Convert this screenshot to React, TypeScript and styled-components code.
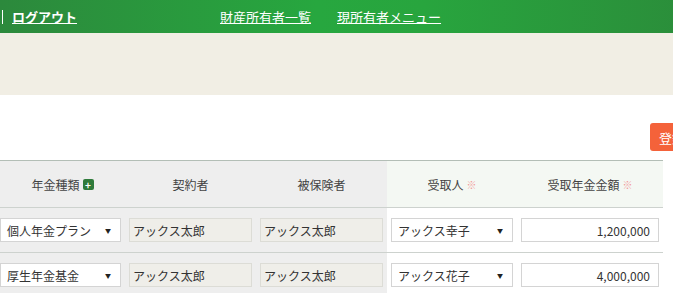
import React from "react";
import styled, { createGlobalStyle } from "styled-components";

const GlobalStyle = createGlobalStyle`
    body {
        margin: 0;
        overflow: hidden;
        background: #fff;
        font-family: "Noto Sans CJK JP", "Noto Sans", sans-serif;
        color: #333;
    }
`;

const Page = styled.div`
    width: 706px;
`;

const Header = styled.header`
    height: 33px;
    display: flex;
    align-items: center;
    padding-left: 2px;
    background: linear-gradient(to right, #2c893c 0%, #27a73f 45%, #28a53e 60%, #2b8c3a 100%);
    color: #fff;
    font-size: 13px;
`;

const Logout = styled.div`
    display: flex;
    align-items: center;
    gap: 9px;
    width: 218px;
    font-weight: bold;

    & > a {
        color: #fff;
        text-decoration: underline;
    }
`;

const Bar = styled.span`
    width: 1px;
    height: 14px;
    background: #fff;
`;

const Nav = styled.nav`
    display: flex;
    gap: 26px;

    & > a {
        color: #fff;
        text-decoration: underline;
    }
`;

const Band = styled.div`
    height: 62px;
    background: #f1eee4;
`;

const Toolbar = styled.div`
    display: flex;
    justify-content: flex-end;
    padding-top: 28px;
    box-sizing: border-box;
    height: 65px;
`;

const RegisterBtn = styled.button`
    width: 56px;
    height: 28px;
    border: none;
    border-radius: 3px;
    background: #f4623a;
    color: #fff;
    font-family: inherit;
    font-size: 13px;
    text-align: left;
    padding-left: 9px;
`;

const Table = styled.div`
    width: 663px;
    display: grid;
    grid-template-columns: 125px 131px 131px 130px 146px;
    font-size: 12px;
`;

const HeadCell = styled.div<{ $green?: boolean }>`
    height: 46px;
    display: flex;
    align-items: center;
    justify-content: center;
    gap: 3px;
    border-top: 1px solid #b3beb6;
    border-bottom: 1px solid #cdd2ce;
    background: ${(p) => (p.$green ? "#f4f8f3" : "#eeeeee")};
    color: #444;
`;

const Cell = styled.div<{ $first?: boolean; $gray?: boolean }>`
    height: 44px;
    display: flex;
    align-items: center;
    padding: 0 4px 0 ${(p) => (p.$first ? "0" : "4px")};
    border-bottom: 1px solid #cdd2ce;
    background: ${(p) => (p.$gray ? "#eeeeee" : "#fff")};
`;

const SelectBox = styled.div`
    flex: 1;
    height: 24px;
    box-sizing: border-box;
    display: flex;
    align-items: center;
    justify-content: space-between;
    padding: 0 9px 0 6px;
    border: 1px solid #d4d4d4;
    background: #fff;
    font-size: 12px;
    color: #333;

    & > span {
        font-size: 6px;
        color: #222;
    }
`;

const TextInput = styled.input<{ $readonly?: boolean; $right?: boolean }>`
    flex: 1;
    width: 100%;
    min-width: 0;
    height: 24px;
    box-sizing: border-box;
    padding: 0 ${(p) => (p.$right ? "8px" : "3px")};
    border: 1px solid ${(p) => (p.$readonly ? "#dcdcd6" : "#d4d4d4")};
    background: ${(p) => (p.$readonly ? "#efeee9" : "#fff")};
    font-family: inherit;
    font-size: 12px;
    color: #333;
    text-align: ${(p) => (p.$right ? "right" : "left")};
    outline: none;
`;

const PlusIcon = styled.span`
    width: 11px;
    height: 11px;
    border-radius: 2px;
    background: #2f7a3a;
    color: #fff;
    font-size: 10px;
    font-weight: bold;
    line-height: 11px;
    text-align: center;
`;

const Req = styled.span`
    color: #f29a9a;
    font-size: 10px;
`;

const rows = [
    { kind: "個人年金プラン", receiver: "アックス幸子", amount: "1,200,000" },
    { kind: "厚生年金基金", receiver: "アックス花子", amount: "4,000,000" },
];

export default function App() {
    return (
        <Page>
            <GlobalStyle />
            <Header>
                <Logout>
                    <Bar />
                    <a href="#">ログアウト</a>
                </Logout>
                <Nav>
                    <a href="#">財産所有者一覧</a>
                    <a href="#">現所有者メニュー</a>
                </Nav>
            </Header>
            <Band />
            <Toolbar>
                <RegisterBtn>登録</RegisterBtn>
            </Toolbar>
            <Table>
                <HeadCell>
                    年金種類<PlusIcon>+</PlusIcon>
                </HeadCell>
                <HeadCell>契約者</HeadCell>
                <HeadCell>被保険者</HeadCell>
                <HeadCell $green>
                    受取人<Req>※</Req>
                </HeadCell>
                <HeadCell $green>
                    受取年金金額<Req>※</Req>
                </HeadCell>
                {rows.map((r) => (
                    <React.Fragment key={r.kind}>
                        <Cell $first $gray>
                            <SelectBox>
                                {r.kind}
                                <span>▼</span>
                            </SelectBox>
                        </Cell>
                        <Cell $gray>
                            <TextInput $readonly readOnly value="アックス太郎" />
                        </Cell>
                        <Cell $gray>
                            <TextInput $readonly readOnly value="アックス太郎" />
                        </Cell>
                        <Cell>
                            <SelectBox>
                                {r.receiver}
                                <span>▼</span>
                            </SelectBox>
                        </Cell>
                        <Cell>
                            <TextInput $right readOnly value={r.amount} />
                        </Cell>
                    </React.Fragment>
                ))}
            </Table>
        </Page>
    );
}
